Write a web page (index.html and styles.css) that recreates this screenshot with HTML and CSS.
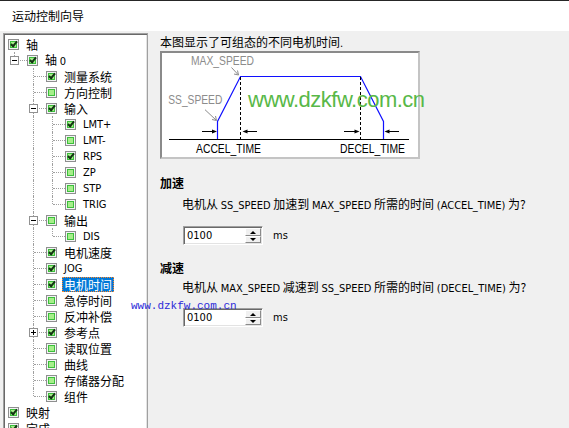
FILE: index.html
```html
<!DOCTYPE html>
<html lang="zh-CN">
<head>
    <meta charset="UTF-8">
    <meta name="viewport" content="width=device-width, initial-scale=1.0">
    <title>运动控制向导</title>
    <link rel="stylesheet" href="styles.css">
</head>
<body>
    <div class="titlebar">运动控制向导</div>
    <div class="main">
        <div class="tree">
            <div class="row"><span class="cb on"></span><span class="label">轴</span></div>
            <div class="row"><span class="cell elbow"><span class="exp"></span></span><span class="cb on"></span><span class="label">轴 <span class="en">0</span></span></div>
            <div class="row"><span class="cell"></span><span class="cell tee"></span><span class="cb on"></span><span class="label">测量系统</span></div>
            <div class="row"><span class="cell"></span><span class="cell tee"></span><span class="cb"></span><span class="label">方向控制</span></div>
            <div class="row"><span class="cell"></span><span class="cell tee"><span class="exp"></span></span><span class="cb on"></span><span class="label">输入</span></div>
            <div class="row"><span class="cell"></span><span class="cell line"></span><span class="cell tee"></span><span class="cb on"></span><span class="label en">LMT+</span></div>
            <div class="row"><span class="cell"></span><span class="cell line"></span><span class="cell tee"></span><span class="cb"></span><span class="label en">LMT-</span></div>
            <div class="row"><span class="cell"></span><span class="cell line"></span><span class="cell tee"></span><span class="cb on"></span><span class="label en">RPS</span></div>
            <div class="row"><span class="cell"></span><span class="cell line"></span><span class="cell tee"></span><span class="cb"></span><span class="label en">ZP</span></div>
            <div class="row"><span class="cell"></span><span class="cell line"></span><span class="cell tee"></span><span class="cb"></span><span class="label en">STP</span></div>
            <div class="row"><span class="cell"></span><span class="cell line"></span><span class="cell elbow"></span><span class="cb"></span><span class="label en">TRIG</span></div>
            <div class="row"><span class="cell"></span><span class="cell tee"><span class="exp"></span></span><span class="cb"></span><span class="label">输出</span></div>
            <div class="row"><span class="cell"></span><span class="cell line"></span><span class="cell elbow"></span><span class="cb"></span><span class="label en">DIS</span></div>
            <div class="row"><span class="cell"></span><span class="cell tee"></span><span class="cb on"></span><span class="label">电机速度</span></div>
            <div class="row"><span class="cell"></span><span class="cell tee"></span><span class="cb on"></span><span class="label en">JOG</span></div>
            <div class="row"><span class="cell"></span><span class="cell tee"></span><span class="cb on"></span><span class="label sel">电机时间</span></div>
            <div class="row"><span class="cell"></span><span class="cell tee"></span><span class="cb"></span><span class="label">急停时间</span></div>
            <div class="row"><span class="cell"></span><span class="cell tee"></span><span class="cb"></span><span class="label">反冲补偿</span></div>
            <div class="row"><span class="cell"></span><span class="cell tee"><span class="exp plus"></span></span><span class="cb on"></span><span class="label">参考点</span></div>
            <div class="row"><span class="cell"></span><span class="cell tee"></span><span class="cb"></span><span class="label">读取位置</span></div>
            <div class="row"><span class="cell"></span><span class="cell tee"></span><span class="cb"></span><span class="label">曲线</span></div>
            <div class="row"><span class="cell"></span><span class="cell tee"></span><span class="cb"></span><span class="label">存储器分配</span></div>
            <div class="row"><span class="cell"></span><span class="cell elbow"></span><span class="cb on"></span><span class="label">组件</span></div>
            <div class="row"><span class="cb on"></span><span class="label">映射</span></div>
            <div class="row"><span class="cb on"></span><span class="label">完成</span></div>
        </div>

        <div class="content">
            <p class="intro">本图显示了可组态的不同电机时间<span class="en">.</span></p>
            <div class="diagram">
                <svg class="chart" width="256" height="104" viewBox="0 0 256 104">
                    <g font-family="Liberation Sans, sans-serif" font-size="12" fill="#8c8c8c">
                        <text x="29" y="12.3" textLength="63" lengthAdjust="spacingAndGlyphs">MAX_SPEED</text>
                        <text x="6.3" y="51" textLength="54" lengthAdjust="spacingAndGlyphs">SS_SPEED</text>
                    </g>
                    <g stroke="#8c8c8c" fill="none">
                        <line x1="69.5" y1="14.5" x2="76" y2="21.5"/>
                        <polyline points="72,21 76.5,22 75.5,17.5"/>
                        <line x1="43" y1="56.7" x2="54" y2="67"/>
                        <polyline points="50,66.5 54.5,67.5 53.5,63"/>
                    </g>
                    <polyline points="55.5,86 55.5,68.5 78.5,23.5 198.5,23.5 221.5,68.5 221.5,86" fill="none" stroke="#1010ff" stroke-width="1.2"/>
                    <line x1="7" y1="86.5" x2="247" y2="86.5" stroke="#000"/>
                    <g stroke="#000" stroke-dasharray="3 2">
                        <line x1="78.5" y1="24" x2="78.5" y2="86"/>
                        <line x1="198.5" y1="24" x2="198.5" y2="86"/>
                    </g>
                    <g stroke="#000" fill="#000">
                        <line x1="40" y1="78.5" x2="51" y2="78.5"/>
                        <polygon points="55,78.5 50,76.5 50,80.5" stroke="none"/>
                        <line x1="84" y1="78.5" x2="95" y2="78.5"/>
                        <polygon points="80.5,78.5 85.5,76.5 85.5,80.5" stroke="none"/>
                        <line x1="182" y1="78.5" x2="193" y2="78.5"/>
                        <polygon points="197.5,78.5 192.5,76.5 192.5,80.5" stroke="none"/>
                        <line x1="226" y1="78.5" x2="237" y2="78.5"/>
                        <polygon points="222.5,78.5 227.5,76.5 227.5,80.5" stroke="none"/>
                    </g>
                    <g font-family="Liberation Sans, sans-serif" font-size="12" fill="#000">
                        <text x="34" y="100" textLength="65" lengthAdjust="spacingAndGlyphs">ACCEL_TIME</text>
                        <text x="178" y="100" textLength="65" lengthAdjust="spacingAndGlyphs">DECEL_TIME</text>
                    </g>
                </svg>
                <div class="wm-big">www.dzkfw.com.cn</div>
            </div>

            <div class="group">
                <h3 class="sec">加速</h3>
                <p class="ask">电机从 <span class="en">SS_SPEED</span> 加速到 <span class="en">MAX_SPEED</span> 所需的时间 <span class="en">(ACCEL_TIME)</span> 为?</p>
                <div class="field">
                    <div class="spin"><span class="val">0100</span><span class="btns"><span class="up"></span><span class="down"></span></span></div>
                    <span class="unit en">ms</span>
                </div>
            </div>

            <div class="group compact">
                <h3 class="sec">减速</h3>
                <p class="ask">电机从 <span class="en">MAX_SPEED</span> 减速到 <span class="en">SS_SPEED</span> 所需的时间 <span class="en">(DECEL_TIME)</span> 为?</p>
                <div class="field">
                    <div class="spin"><span class="val">0100</span><span class="btns"><span class="up"></span><span class="down"></span></span></div>
                    <span class="unit en">ms</span>
                </div>
            </div>
        </div>
    </div>
    <div class="wm-small">www.dzkfw.com.cn</div>
</body>
</html>
```

FILE: styles.css
```css
body {
    margin: 0;
    width: 569px;
    height: 428px;
    overflow: hidden;
    position: relative;
    background-color: #f0f0f0;
    font-family: "Noto Sans CJK SC", sans-serif;
    font-size: 12px;
    color: #000;
}
.en {
    font-family: "DejaVu Sans Condensed", "Liberation Sans", sans-serif;
    font-size: 11px;
    line-height: 12px;
}
.titlebar {
    height: 30px;
    line-height: 30px;
    padding-left: 12px;
    border-top: 1px solid #262626;
    background-color: #fff;
}
.main {
    display: flex;
    height: 397px;
}

/* tree */
.tree {
    flex: none;
    width: 145px;
    height: 400px;
    margin: 2px 0 0 3px;
    padding: 2px 0 0 1px;
    box-sizing: border-box;
    border: 1px solid;
    border-color: #a0a0a0 #a0a0a0 #fff #a0a0a0;
    box-shadow: inset 1px 1px 0 #696969, inset -1px -1px 0 #e3e3e3;
    background-color: #fff;
    overflow: hidden;
}
.row {
    display: flex;
    align-items: center;
    height: 16px;
}
.cell {
    position: relative;
    flex: none;
    width: 19px;
    height: 16px;
}
.cell.line::before,
.cell.tee::before,
.cell.elbow::before {
    content: "";
    position: absolute;
    left: 9px;
    top: 0;
    height: 16px;
    border-left: 1px dotted #a0a0a0;
}
.cell.elbow::before {
    height: 8px;
}
.cell.tee::after,
.cell.elbow::after {
    content: "";
    position: absolute;
    left: 10px;
    top: 8px;
    width: 12px;
    border-top: 1px dotted #a0a0a0;
}
.exp {
    position: absolute;
    left: 5px;
    top: 4px;
    z-index: 1;
    width: 9px;
    height: 9px;
    box-sizing: border-box;
    border: 1px solid #919191;
    background-color: #fff;
}
.exp::before {
    content: "";
    position: absolute;
    left: 1px;
    top: 3px;
    width: 5px;
    height: 1px;
    background-color: #000;
}
.exp.plus::after {
    content: "";
    position: absolute;
    left: 3px;
    top: 1px;
    width: 1px;
    height: 5px;
    background-color: #000;
}
.cb {
    position: relative;
    flex: none;
    width: 11px;
    height: 11px;
    margin-left: 3px;
    box-sizing: border-box;
    border: 1px solid #8e8f8f;
    padding: 1px;
    background-color: #f4f4f4;
}
.cb::before {
    content: "";
    display: block;
    width: 7px;
    height: 7px;
    background-color: #a6ee8a;
    box-shadow: inset 0 0 0 1px #3cbf3c;
}
.cb.on::after {
    content: "";
    position: absolute;
    left: 3px;
    top: 0;
    width: 2px;
    height: 5px;
    border: solid #143214;
    border-width: 0 2px 2px 0;
    transform: rotate(40deg);
}
.label {
    margin-left: 5px;
    padding: 0 1px;
    border: 1px dotted transparent;
    line-height: 13px;
    white-space: nowrap;
}
.label.sel {
    background-color: #0078d7;
    color: #fff;
    border-color: #ff8728;
}

/* right side */
.content {
    flex: 1;
    padding: 3px 0 0 12px;
}
.intro {
    margin: 0;
    line-height: 16px;
}
.diagram {
    position: relative;
    width: 256px;
    height: 104px;
    margin-top: 1px;
    border: 2px solid;
    border-color: #8a8a8a #c4c4c4 #c4c4c4 #8a8a8a;
    background-color: #fff;
}
.chart {
    display: block;
}
.wm-big {
    position: absolute;
    left: 86px;
    top: 36px;
    font-family: "Liberation Sans", sans-serif;
    font-size: 22px;
    line-height: 22px;
    letter-spacing: -0.5px;
    color: #58b848;
    white-space: nowrap;
}
.sec {
    margin: 16px 0 0;
    font-size: 12px;
    font-weight: bold;
    line-height: 16px;
}
.compact .sec {
    margin-top: 15px;
}
.ask {
    margin: 5px 0 0;
    padding-left: 22px;
    line-height: 16px;
}
.compact .ask {
    margin-top: 3px;
}
.field {
    display: flex;
    align-items: center;
    height: 19px;
    margin-top: 14px;
    padding-left: 23px;
}
.compact .field {
    margin-top: 13px;
}
.spin {
    display: flex;
    width: 80px;
    height: 19px;
    box-sizing: border-box;
    padding: 1px;
    border: 1px solid;
    border-color: #a0a0a0 #fff #fff #a0a0a0;
    box-shadow: inset 1px 1px 0 #696969, inset -1px -1px 0 #e3e3e3;
    background-color: #fff;
}
.val {
    flex: 1;
    padding-left: 2px;
    font-family: "DejaVu Sans Condensed", "Liberation Sans", sans-serif;
    font-size: 11px;
    line-height: 15px;
}
.btns {
    display: flex;
    flex-direction: column;
    width: 16px;
}
.btns span {
    position: relative;
    flex: 1;
    border: 1px solid;
    border-color: #fff #8a8a8a #8a8a8a #fff;
    background-color: #f0f0f0;
}
.btns span::after {
    content: "";
    position: absolute;
    left: 4px;
    top: 2px;
    width: 0;
    height: 0;
    border-left: 3px solid transparent;
    border-right: 3px solid transparent;
}
.btns .up::after {
    border-bottom: 3px solid #000;
}
.btns .down::after {
    top: 1px;
    border-top: 3px solid #000;
}
.unit {
    margin-left: 10px;
}
.wm-small {
    position: absolute;
    left: 131px;
    top: 301px;
    font-family: "Liberation Mono", monospace;
    font-size: 11px;
    line-height: 11px;
    color: #2a2ad8;
    white-space: nowrap;
}
```
